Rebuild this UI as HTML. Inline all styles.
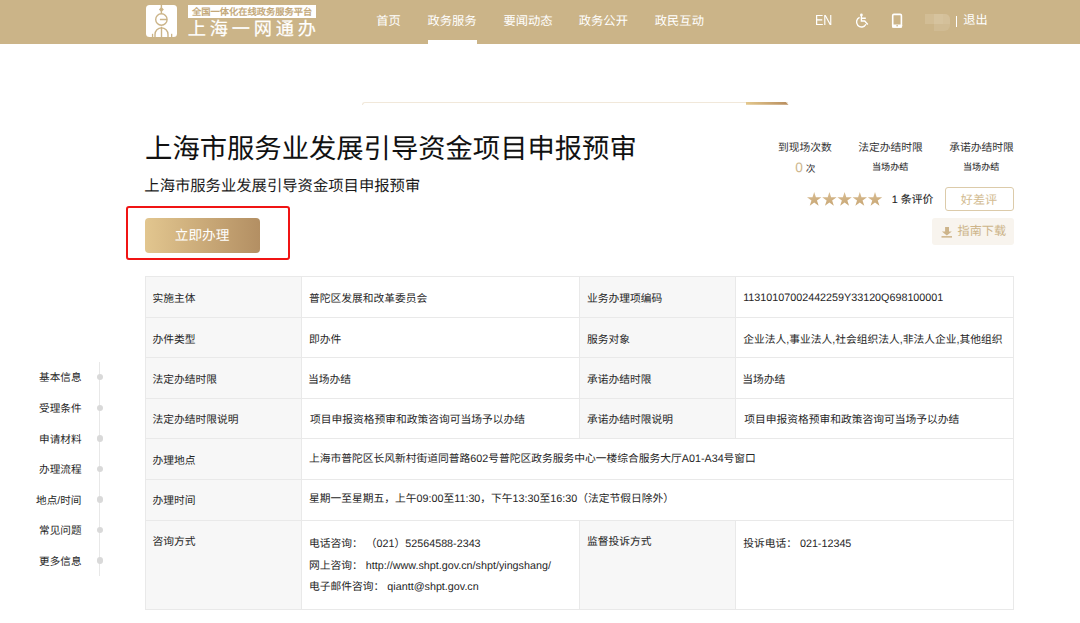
<!DOCTYPE html>
<html lang="zh-CN"><head><meta charset="utf-8"><title>上海一网通办</title>
<style>*{margin:0;padding:0;box-sizing:border-box;}html,body{background:#fff;font-family:"Liberation Sans",sans-serif;}html,body{width:1080px;height:623px;overflow:hidden;}.a{position:absolute;}
.hl{position:absolute;left:145px;width:869px;height:1px;background:#e9e9e9;}
.vl{position:absolute;width:1px;background:#e9e9e9;}
.lb{position:absolute;background:#f7f7f7;}
.dot{position:absolute;left:96.8px;width:6.4px;height:6.4px;border-radius:50%;background:#d9d9d9;}
</style></head>
<body>
<div class="a" style="left:0;top:0;width:1080px;height:43.5px;background:#cbb488;"></div>
<div class="a" style="left:145.6px;top:5.1px;width:31.7px;height:31.8px;background:#fff;border-radius:3.5px;overflow:hidden;">
<svg width="32" height="32" viewBox="0 0 32 32" style="display:block">
<g fill="none" stroke="#cbb488" stroke-width="1.4">
<line x1="15.4" y1="0" x2="15.4" y2="9"/>
<circle cx="15.4" cy="14.5" r="5.7"/>
<line x1="13.9" y1="14.5" x2="21" y2="14.5"/>
<path d="M9.0 32 V29.4 A6.5 6.5 0 0 1 22.0 29.4 V32"/>
<line x1="15.5" y1="21.7" x2="15.5" y2="32"/>
</g>
<path d="M15.4 1.9 L17.9 4.5 L15.4 7.1 L12.9 4.5Z" fill="#cbb488"/>
<rect x="5.9" y="28.8" width="1.3" height="4" fill="#cbb488"/>
<rect x="25.0" y="28.8" width="1.3" height="4" fill="#cbb488"/>
</svg></div>
<div class="a" style="left:188px;top:4.6px;width:128px;height:13.6px;background:#fff;"></div>
<div class="a" style="left:428px;top:39.6px;width:49px;height:4px;background:#fff;"></div>
<svg class="a" style="left:854px;top:13px;" width="16" height="16" viewBox="0 0 16 16">
<circle cx="7.4" cy="1.9" r="1.35" fill="#fff"/>
<path d="M7.4 2.5 V8.05 H10.7 L13.8 11.4 M7.4 5.3 H11.8" fill="none" stroke="#fff" stroke-width="1.4"/>
<path d="M5.6 4.4 A5.0 5.0 0 1 0 12.0 11.3" fill="none" stroke="#fff" stroke-width="1.4"/>
</svg>
<svg class="a" style="left:891px;top:13px;" width="12" height="15" viewBox="0 0 12 15">
<rect x="1.7" y="1.4" width="8.7" height="12.5" rx="1.2" fill="none" stroke="#fff" stroke-width="1.6"/>
<rect x="1.0" y="11.4" width="10.1" height="3.3" rx="0.8" fill="#fff"/>
<rect x="5.3" y="12.2" width="1.7" height="1.1" fill="#cbb488"/>
</svg>
<div class="a" style="left:925px;top:14.3px;width:25px;height:16.3px;overflow:hidden;border-radius:0 5px 6px 0;filter:blur(0.4px);">
<div class="a" style="left:0;top:0;width:9px;height:9.3px;background:#d2bd95;"></div>
<div class="a" style="left:9px;top:0;width:9.2px;height:9.3px;background:#d6c39e;"></div>
<div class="a" style="left:18.2px;top:0;width:7px;height:9.3px;background:#d4c09a;"></div>
<div class="a" style="left:9px;top:9.3px;width:16px;height:7px;background:#d0bb93;"></div>
</div>
<div class="a" style="left:955.5px;top:16.2px;width:1.1px;height:10.6px;background:#fff;"></div>

<div class="a" style="left:366px;top:101.5px;width:422px;height:1px;background:#f1e8da;"></div>
<div class="a" style="left:362.2px;top:101.5px;width:5px;height:3.2px;border-left:1px solid #f1e8da;border-top:1px solid #f1e8da;border-radius:5px 0 0 0;"></div>
<div class="a" style="left:746px;top:101.8px;width:42.5px;height:3px;background:linear-gradient(90deg,#e3c78c,#b78c5d);clip-path:polygon(0 0,93% 0,100% 100%,0 100%);"></div>

<div class="a" style="left:126px;top:206px;width:164px;height:54px;border:2px solid #f01414;border-radius:3px;"></div>
<div class="a" style="left:145px;top:218px;width:115px;height:35.3px;border-radius:4px;background:linear-gradient(90deg,#e2c68f,#b38f63);"></div>

<svg class="a" style="left:806.8px;top:192.4px;" width="76" height="14" viewBox="0 0 76 14">
<defs><linearGradient id="sg" x1="0" y1="0" x2="0.3" y2="1"><stop offset="0" stop-color="#dcc197"/><stop offset="1" stop-color="#c9a877"/></linearGradient></defs>
<g fill="url(#sg)">
<path id="s" d="M7.20 0.00 L8.90 5.23 L14.40 5.23 L9.95 8.46 L11.65 13.69 L7.20 10.46 L2.75 13.69 L4.45 8.46 L0.00 5.23 L5.50 5.23Z"/>
<use href="#s" x="15.2"/><use href="#s" x="30.4"/><use href="#s" x="45.6"/><use href="#s" x="60.8"/>
</g></svg>
<div class="a" style="left:945.4px;top:187px;width:68.6px;height:24px;border:1px solid #dccbaa;border-radius:3px;"></div>
<div class="a" style="left:932px;top:218.3px;width:82px;height:26.7px;background:#f8f4ee;border-radius:3px;"></div>
<svg class="a" style="left:940.5px;top:224.5px;" width="11" height="13" viewBox="0 0 11 13">
<path d="M4.1 1.9 H8.0 V6.6 H10.8 L5.85 10.6 L0.9 6.6 H4.1Z" fill="#cdb48a"/>
<rect x="0.5" y="11.1" width="10.7" height="1.5" fill="#cdb48a"/>
</svg>

<div class="lb" style="left:145px;top:276px;width:156px;height:333px;"></div>
<div class="lb" style="left:579px;top:276px;width:156px;height:41px;"></div>
<div class="lb" style="left:579px;top:317px;width:156px;height:40px;"></div>
<div class="lb" style="left:579px;top:357px;width:156px;height:41px;"></div>
<div class="lb" style="left:579px;top:398px;width:156px;height:40px;"></div>
<div class="lb" style="left:579px;top:520px;width:156px;height:89px;"></div>
<div class="hl" style="top:276px;"></div>
<div class="hl" style="top:317px;"></div>
<div class="hl" style="top:357px;"></div>
<div class="hl" style="top:398px;"></div>
<div class="hl" style="top:438px;"></div>
<div class="hl" style="top:479px;"></div>
<div class="hl" style="top:520px;"></div>
<div class="hl" style="top:609px;"></div>
<div class="vl" style="left:145px;top:276px;height:334px;"></div>
<div class="vl" style="left:301px;top:276px;height:334px;"></div>
<div class="vl" style="left:1013px;top:276px;height:334px;"></div>
<div class="vl" style="left:579px;top:276px;height:163px;"></div>
<div class="vl" style="left:579px;top:520px;height:90px;"></div>
<div class="vl" style="left:735px;top:276px;height:163px;"></div>
<div class="vl" style="left:735px;top:520px;height:90px;"></div>
<div class="a" style="left:99px;top:362px;width:1px;height:214px;background:#e8e8e8;"></div>
<div class="dot" style="top:373.9px;"></div>
<div class="dot" style="top:404.5px;"></div>
<div class="dot" style="top:435.2px;"></div>
<div class="dot" style="top:465.6px;"></div>
<div class="dot" style="top:496.2px;"></div>
<div class="dot" style="top:526.8px;"></div>
<div class="dot" style="top:557.3px;"></div>
<div style="position:absolute;left:376.30px;top:11.80px;font-size:12.296px;line-height:18.44px;font-weight:400;letter-spacing:0.000px;color:#fff;white-space:nowrap;text-rendering:geometricPrecision;">首页</div>
<div style="position:absolute;left:427.50px;top:11.80px;font-size:12.296px;line-height:18.44px;font-weight:400;letter-spacing:0.000px;color:#fff;white-space:nowrap;text-rendering:geometricPrecision;">政务服务</div>
<div style="position:absolute;left:503.40px;top:11.80px;font-size:12.296px;line-height:18.44px;font-weight:400;letter-spacing:0.000px;color:#fff;white-space:nowrap;text-rendering:geometricPrecision;">要闻动态</div>
<div style="position:absolute;left:578.80px;top:11.80px;font-size:12.296px;line-height:18.44px;font-weight:400;letter-spacing:0.000px;color:#fff;white-space:nowrap;text-rendering:geometricPrecision;">政务公开</div>
<div style="position:absolute;left:654.80px;top:11.80px;font-size:12.296px;line-height:18.44px;font-weight:400;letter-spacing:0.000px;color:#fff;white-space:nowrap;text-rendering:geometricPrecision;">政民互动</div>
<div style="position:absolute;left:814.50px;top:8.90px;font-size:12.144px;line-height:18.22px;font-weight:400;letter-spacing:0.000px;color:#fff;white-space:nowrap;text-rendering:geometricPrecision;transform:scale(1.03,1.2);transform-origin:0 0;">EN</div>
<div style="position:absolute;left:963.30px;top:11.30px;font-size:12.144px;line-height:18.22px;font-weight:400;letter-spacing:0.000px;color:#fff;white-space:nowrap;text-rendering:geometricPrecision;">退出</div>
<div style="position:absolute;left:192.10px;top:5.80px;font-size:9.260px;line-height:13.89px;font-weight:700;letter-spacing:0.000px;color:#c4a97b;white-space:nowrap;text-rendering:geometricPrecision;">全国一体化在线政务服务平台</div>
<div style="position:absolute;left:187.70px;top:16.30px;font-size:18.216px;line-height:27.32px;font-weight:400;letter-spacing:3.795px;color:#fff;white-space:nowrap;text-rendering:geometricPrecision;-webkit-text-stroke:0.2px #fff;">上海一网通办</div>
<div style="position:absolute;left:145.10px;top:129.10px;font-size:27.324px;line-height:40.99px;font-weight:400;letter-spacing:0.000px;color:#111;white-space:nowrap;text-rendering:geometricPrecision;">上海市服务业发展引导资金项目申报预审</div>
<div style="position:absolute;left:144.30px;top:175.30px;font-size:15.332px;line-height:23.00px;font-weight:400;letter-spacing:0.000px;color:#1a1a1a;white-space:nowrap;text-rendering:geometricPrecision;">上海市服务业发展引导资金项目申报预审</div>
<div style="position:absolute;left:174.80px;top:226.00px;font-size:13.662px;line-height:20.49px;font-weight:400;letter-spacing:0.000px;color:#fff;white-space:nowrap;text-rendering:geometricPrecision;">立即办理</div>
<div style="position:absolute;left:778.00px;top:139.60px;font-size:10.778px;line-height:16.17px;font-weight:400;letter-spacing:0.000px;color:#333;white-space:nowrap;text-rendering:geometricPrecision;">到现场次数</div>
<div style="position:absolute;left:858.20px;top:139.60px;font-size:10.778px;line-height:16.17px;font-weight:400;letter-spacing:0.000px;color:#333;white-space:nowrap;text-rendering:geometricPrecision;">法定办结时限</div>
<div style="position:absolute;left:949.20px;top:139.60px;font-size:10.778px;line-height:16.17px;font-weight:400;letter-spacing:0.000px;color:#333;white-space:nowrap;text-rendering:geometricPrecision;">承诺办结时限</div>
<div style="position:absolute;left:795.30px;top:157.60px;font-size:13.662px;line-height:20.49px;font-weight:300;letter-spacing:0.000px;color:#cdb68c;white-space:nowrap;text-rendering:geometricPrecision;">0</div>
<div style="position:absolute;left:805.80px;top:163.10px;font-size:9.715px;line-height:14.57px;font-weight:400;letter-spacing:0.000px;color:#333;white-space:nowrap;text-rendering:geometricPrecision;">次</div>
<div style="position:absolute;left:872.00px;top:161.30px;font-size:9.108px;line-height:13.66px;font-weight:400;letter-spacing:0.000px;color:#333;white-space:nowrap;text-rendering:geometricPrecision;-webkit-text-stroke:0.12px #333;">当场办结</div>
<div style="position:absolute;left:963.00px;top:161.30px;font-size:9.108px;line-height:13.66px;font-weight:400;letter-spacing:0.000px;color:#333;white-space:nowrap;text-rendering:geometricPrecision;-webkit-text-stroke:0.12px #333;">当场办结</div>
<div style="position:absolute;left:891.80px;top:191.80px;font-size:10.854px;line-height:16.28px;font-weight:400;letter-spacing:0.000px;color:#222;white-space:nowrap;text-rendering:geometricPrecision;-webkit-text-stroke:0.1px #222;">1 条评价</div>
<div style="position:absolute;left:960.80px;top:190.60px;font-size:12.144px;line-height:18.22px;font-weight:400;letter-spacing:0.000px;color:#d3bc92;white-space:nowrap;text-rendering:geometricPrecision;">好差评</div>
<div style="position:absolute;left:957.60px;top:221.90px;font-size:12.144px;line-height:18.22px;font-weight:400;letter-spacing:0.000px;color:#cdb48a;white-space:nowrap;text-rendering:geometricPrecision;">指南下载</div>
<div style="position:absolute;left:152.50px;top:290.60px;font-size:10.750px;line-height:16.12px;font-weight:400;letter-spacing:0.000px;color:#262626;white-space:nowrap;text-rendering:geometricPrecision;">实施主体</div>
<div style="position:absolute;left:309.10px;top:290.60px;font-size:10.750px;line-height:16.12px;font-weight:400;letter-spacing:0.000px;color:#262626;white-space:nowrap;text-rendering:geometricPrecision;">普陀区发展和改革委员会</div>
<div style="position:absolute;left:586.90px;top:290.60px;font-size:10.750px;line-height:16.12px;font-weight:400;letter-spacing:0.000px;color:#262626;white-space:nowrap;text-rendering:geometricPrecision;">业务办理项编码</div>
<div style="position:absolute;left:743.20px;top:289.60px;font-size:10.750px;line-height:16.12px;font-weight:400;letter-spacing:0.000px;color:#262626;white-space:nowrap;text-rendering:geometricPrecision;">11310107002442259Y33120Q698100001</div>
<div style="position:absolute;left:152.50px;top:331.50px;font-size:10.750px;line-height:16.12px;font-weight:400;letter-spacing:0.000px;color:#262626;white-space:nowrap;text-rendering:geometricPrecision;">办件类型</div>
<div style="position:absolute;left:309.10px;top:331.50px;font-size:10.750px;line-height:16.12px;font-weight:400;letter-spacing:0.000px;color:#262626;white-space:nowrap;text-rendering:geometricPrecision;">即办件</div>
<div style="position:absolute;left:586.90px;top:331.50px;font-size:10.750px;line-height:16.12px;font-weight:400;letter-spacing:0.000px;color:#262626;white-space:nowrap;text-rendering:geometricPrecision;">服务对象</div>
<div style="position:absolute;left:743.20px;top:331.50px;font-size:10.750px;line-height:16.12px;font-weight:400;letter-spacing:0.000px;color:#262626;white-space:nowrap;text-rendering:geometricPrecision;">企业法人,事业法人,社会组织法人,非法人企业,其他组织</div>
<div style="position:absolute;left:152.50px;top:371.70px;font-size:10.750px;line-height:16.12px;font-weight:400;letter-spacing:0.000px;color:#262626;white-space:nowrap;text-rendering:geometricPrecision;">法定办结时限</div>
<div style="position:absolute;left:308.10px;top:371.70px;font-size:10.750px;line-height:16.12px;font-weight:400;letter-spacing:0.000px;color:#262626;white-space:nowrap;text-rendering:geometricPrecision;">当场办结</div>
<div style="position:absolute;left:586.90px;top:371.70px;font-size:10.750px;line-height:16.12px;font-weight:400;letter-spacing:0.000px;color:#262626;white-space:nowrap;text-rendering:geometricPrecision;">承诺办结时限</div>
<div style="position:absolute;left:742.20px;top:371.70px;font-size:10.750px;line-height:16.12px;font-weight:400;letter-spacing:0.000px;color:#262626;white-space:nowrap;text-rendering:geometricPrecision;">当场办结</div>
<div style="position:absolute;left:152.50px;top:412.40px;font-size:10.750px;line-height:16.12px;font-weight:400;letter-spacing:0.000px;color:#262626;white-space:nowrap;text-rendering:geometricPrecision;">法定办结时限说明</div>
<div style="position:absolute;left:310.10px;top:412.40px;font-size:10.750px;line-height:16.12px;font-weight:400;letter-spacing:0.000px;color:#262626;white-space:nowrap;text-rendering:geometricPrecision;">项目申报资格预审和政策咨询可当场予以办结</div>
<div style="position:absolute;left:586.90px;top:412.40px;font-size:10.750px;line-height:16.12px;font-weight:400;letter-spacing:0.000px;color:#262626;white-space:nowrap;text-rendering:geometricPrecision;">承诺办结时限说明</div>
<div style="position:absolute;left:744.20px;top:412.40px;font-size:10.750px;line-height:16.12px;font-weight:400;letter-spacing:0.000px;color:#262626;white-space:nowrap;text-rendering:geometricPrecision;">项目申报资格预审和政策咨询可当场予以办结</div>
<div style="position:absolute;left:152.50px;top:452.90px;font-size:10.750px;line-height:16.12px;font-weight:400;letter-spacing:0.000px;color:#262626;white-space:nowrap;text-rendering:geometricPrecision;">办理地点</div>
<div style="position:absolute;left:309.10px;top:450.60px;font-size:10.750px;line-height:16.12px;font-weight:400;letter-spacing:0.000px;color:#262626;white-space:nowrap;text-rendering:geometricPrecision;">上海市普陀区长风新村街道同普路602号普陀区政务服务中心一楼综合服务大厅A01-A34号窗口</div>
<div style="position:absolute;left:152.50px;top:493.10px;font-size:10.750px;line-height:16.12px;font-weight:400;letter-spacing:0.000px;color:#262626;white-space:nowrap;text-rendering:geometricPrecision;">办理时间</div>
<div style="position:absolute;left:309.10px;top:490.80px;font-size:10.750px;line-height:16.12px;font-weight:400;letter-spacing:0.000px;color:#262626;white-space:nowrap;text-rendering:geometricPrecision;">星期一至星期五，上午09:00至11:30，下午13:30至16:30（法定节假日除外）</div>
<div style="position:absolute;left:152.50px;top:534.00px;font-size:10.750px;line-height:16.12px;font-weight:400;letter-spacing:0.000px;color:#262626;white-space:nowrap;text-rendering:geometricPrecision;">咨询方式</div>
<div style="position:absolute;left:309.10px;top:536.00px;font-size:10.750px;line-height:16.12px;font-weight:400;letter-spacing:0.000px;color:#262626;white-space:nowrap;text-rendering:geometricPrecision;">电话咨询： （021）52564588-2343</div>
<div style="position:absolute;left:309.10px;top:557.70px;font-size:10.750px;line-height:16.12px;font-weight:400;letter-spacing:0.000px;color:#262626;white-space:nowrap;text-rendering:geometricPrecision;">网上咨询： http://www.shpt.gov.cn/shpt/yingshang/</div>
<div style="position:absolute;left:309.10px;top:579.00px;font-size:10.750px;line-height:16.12px;font-weight:400;letter-spacing:0.000px;color:#262626;white-space:nowrap;text-rendering:geometricPrecision;">电子邮件咨询： qiantt@shpt.gov.cn</div>
<div style="position:absolute;left:586.90px;top:533.80px;font-size:10.750px;line-height:16.12px;font-weight:400;letter-spacing:0.000px;color:#262626;white-space:nowrap;text-rendering:geometricPrecision;">监督投诉方式</div>
<div style="position:absolute;left:743.20px;top:536.20px;font-size:10.750px;line-height:16.12px;font-weight:400;letter-spacing:0.000px;color:#262626;white-space:nowrap;text-rendering:geometricPrecision;">投诉电话： 021-12345</div>
<div style="position:absolute;left:39.10px;top:371.30px;font-size:10.626px;line-height:15.94px;font-weight:400;letter-spacing:0.000px;color:#262626;white-space:nowrap;text-rendering:geometricPrecision;">基本信息</div>
<div style="position:absolute;left:39.10px;top:401.90px;font-size:10.626px;line-height:15.94px;font-weight:400;letter-spacing:0.000px;color:#262626;white-space:nowrap;text-rendering:geometricPrecision;">受理条件</div>
<div style="position:absolute;left:39.10px;top:432.60px;font-size:10.626px;line-height:15.94px;font-weight:400;letter-spacing:0.000px;color:#262626;white-space:nowrap;text-rendering:geometricPrecision;">申请材料</div>
<div style="position:absolute;left:39.10px;top:463.00px;font-size:10.626px;line-height:15.94px;font-weight:400;letter-spacing:0.000px;color:#262626;white-space:nowrap;text-rendering:geometricPrecision;">办理流程</div>
<div style="position:absolute;left:36.10px;top:493.60px;font-size:10.626px;line-height:15.94px;font-weight:400;letter-spacing:0.000px;color:#262626;white-space:nowrap;text-rendering:geometricPrecision;">地点/时间</div>
<div style="position:absolute;left:39.10px;top:524.20px;font-size:10.626px;line-height:15.94px;font-weight:400;letter-spacing:0.000px;color:#262626;white-space:nowrap;text-rendering:geometricPrecision;">常见问题</div>
<div style="position:absolute;left:39.10px;top:554.70px;font-size:10.626px;line-height:15.94px;font-weight:400;letter-spacing:0.000px;color:#262626;white-space:nowrap;text-rendering:geometricPrecision;">更多信息</div>
</body></html>
